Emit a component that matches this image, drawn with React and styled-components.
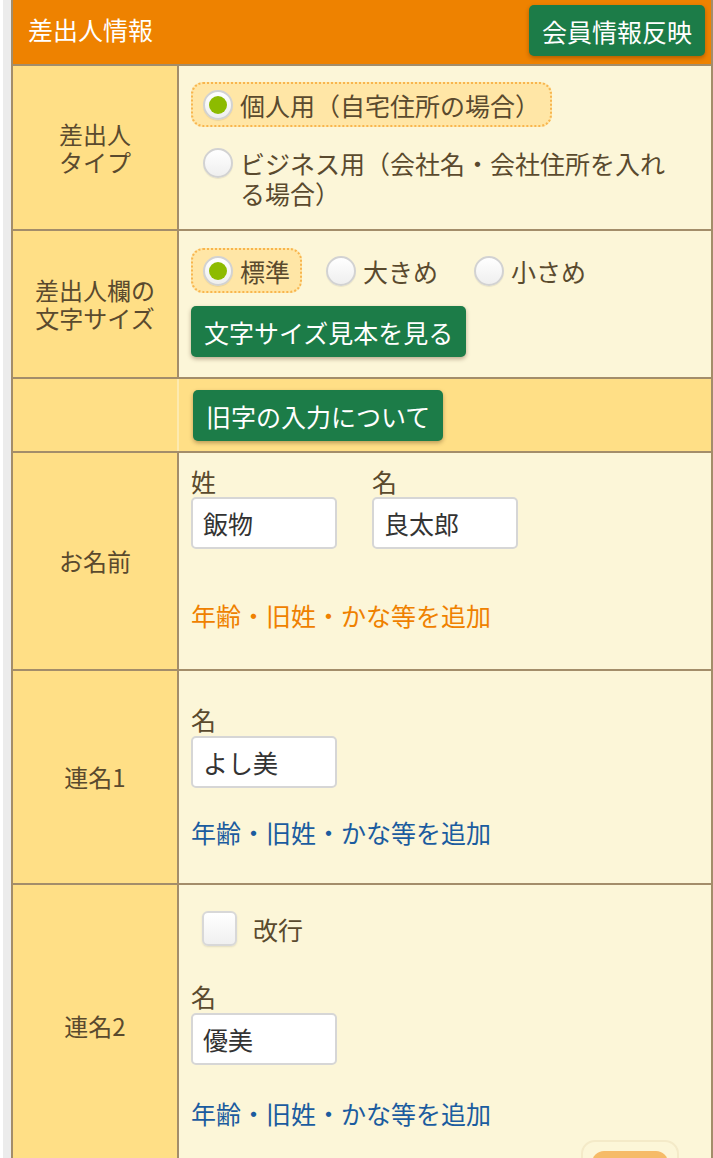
import React from "react";
import styled, { createGlobalStyle, css } from "styled-components";

const Global = createGlobalStyle`
  html, body { margin: 0; padding: 0; background: #ffffff; }
  body { font-family: "Noto Sans CJK JP", "Noto Sans", sans-serif; }
  * { box-sizing: border-box; }
`;

const BROWN = "#a38d6a";
const TEXT = "#5a4a2e";

const Page = styled.div`
  border-left: 3px solid #ffffff;
  padding-left: 8px;
  background: #ececec;
  min-height: 1158px;
`;

const Table = styled.div`
  border-left: 2px solid ${BROWN};
  border-right: 2px solid ${BROWN};
  background: #fcf6d8;
`;

const Header = styled.div`
  height: 66px;
  display: flex;
  align-items: center;
  justify-content: space-between;
  padding: 0 6px 7px 15px;
  background: #ee8200;
  border-bottom: 2px solid ${BROWN};
`;

const HeaderTitle = styled.h2`
  margin: 0;
  font-size: 25px;
  font-weight: 400;
  color: #ffffff;
  line-height: 30px;
`;

const GreenButton = styled.button`
  height: 51px;
  padding: 0 13px;
  border: none;
  border-radius: 5px;
  background: #1c7c48;
  color: #ffffff;
  font-family: inherit;
  font-size: 25px;
  line-height: 30px;
  box-shadow: 0 2px 4px rgba(60, 30, 0, 0.35);
  align-self: flex-start;
  cursor: pointer;
`;

const HeaderButton = styled(GreenButton)`
  margin-top: 5px;
`;

const Row = styled.div`
  display: flex;
  border-bottom: 2px solid ${BROWN};
  ${(p) => p.$tone === "yellow" && css`background: #ffdf86;`}
`;

const Label = styled.div`
  width: 166px;
  flex: none;
  display: flex;
  align-items: center;
  justify-content: center;
  text-align: center;
  background: #ffdf86;
  border-right: 2px solid ${(p) => (p.$soft ? "#fdeab0" : BROWN)};
  color: ${TEXT};
  font-size: 24px;
  line-height: 28px;
  white-space: pre-line;
`;

const Cell = styled.div`
  flex: 1;
  min-width: 0;
  display: flex;
  flex-direction: column;
  align-items: flex-start;
  padding: ${(p) => p.$pad || "16px 20px 14px 12px"};
`;

const OptionList = styled.div`
  display: flex;
  flex-direction: ${(p) => (p.$inline ? "row" : "column")};
  align-items: flex-start;
  gap: ${(p) => (p.$inline ? "12px" : "13px")};
`;

const Option = styled.label`
  display: flex;
  align-items: flex-start;
  gap: 7px;
  padding: 6px 10px 5px 10px;
  border: 2px dotted transparent;
  border-radius: 12px;
  color: ${TEXT};
  font-size: 25px;
  line-height: 30px;
  ${(p) =>
    p.$selected &&
    css`
      border-color: #f8b54e;
      background: #ffe6a6;
    `}
`;

const Radio = styled.span`
  flex: none;
  width: 30px;
  height: 30px;
  border-radius: 50%;
  border: 2px solid #d2d2d2;
  background: linear-gradient(#ffffff, #efefef);
  box-shadow: 0 1px 1px rgba(0, 0, 0, 0.08);
  display: flex;
  align-items: center;
  justify-content: center;
  &::after {
    content: "";
    width: 18px;
    height: 18px;
    border-radius: 50%;
    background: ${(p) => (p.$checked ? "#8dbb00" : "transparent")};
  }
`;

const Spacer = styled.div`
  height: ${(p) => p.$h}px;
  flex: none;
`;

const Fields = styled.div`
  display: flex;
  gap: 35px;
`;

const Field = styled.div`
  display: flex;
  flex-direction: column;
  gap: ${(p) => p.$gap ?? 1}px;
`;

const FieldLabel = styled.span`
  color: ${TEXT};
  font-size: 25px;
  line-height: 30px;
`;

const TextInput = styled.input`
  width: 146px;
  height: 52px;
  padding: 0 10px;
  border: 2px solid #d6d6d6;
  border-radius: 5px;
  background: #ffffff;
  color: #333333;
  font-family: inherit;
  font-size: 25px;
  outline: none;
`;

const AddLink = styled.a`
  font-size: 25px;
  line-height: 30px;
  color: ${(p) => (p.$active ? "#ef8100" : "#1b5c9f")};
  text-decoration: none;
  cursor: pointer;
`;

const CheckRow = styled.label`
  display: flex;
  align-items: center;
  gap: 16px;
  margin-left: 11px;
  color: ${TEXT};
  font-size: 25px;
  line-height: 30px;
`;

const CheckBox = styled.span`
  width: 35px;
  height: 35px;
  border-radius: 6px;
  border: 2px solid #d8d8d8;
  background: linear-gradient(#ffffff, #f0f0f0);
  box-shadow: 0 1px 2px rgba(0, 0, 0, 0.1);
`;

const PillFrame = styled.div`
  align-self: flex-end;
  margin: 12px 12px -36px 0;
  padding: 9px 9px;
  border: 2px solid #f4eac8;
  border-radius: 14px;
`;

const Pill = styled.div`
  width: 76px;
  height: 40px;
  border-radius: 12px;
  background: #f6bb68;
`;

const RadioGroup = ({ options, selected, inline }) => (
  <OptionList $inline={inline}>
    {options.map((o) => (
      <Option key={o} $selected={o === selected}>
        <Radio $checked={o === selected} />
        <span>{o}</span>
      </Option>
    ))}
  </OptionList>
);

export default function App() {
  return (
    <>
      <Global />
      <Page>
        <Table>
          <Header>
            <HeaderTitle>差出人情報</HeaderTitle>
            <HeaderButton>会員情報反映</HeaderButton>
          </Header>

          <Row>
            <Label>{"差出人\nタイプ"}</Label>
            <Cell>
              <RadioGroup
                options={["個人用（自宅住所の場合）", "ビジネス用（会社名・会社住所を入れる場合）"]}
                selected="個人用（自宅住所の場合）"
              />
            </Cell>
          </Row>

          <Row>
            <Label>{"差出人欄の\n文字サイズ"}</Label>
            <Cell $pad="17px 20px 20px 12px">
              <RadioGroup inline options={["標準", "大きめ", "小さめ"]} selected="標準" />
              <Spacer $h={13} />
              <GreenButton>文字サイズ見本を見る</GreenButton>
            </Cell>
          </Row>

          <Row $tone="yellow">
            <Label $soft />
            <Cell $pad="11px 20px 10px 14px">
              <GreenButton>旧字の入力について</GreenButton>
            </Cell>
          </Row>

          <Row>
            <Label>お名前</Label>
            <Cell $pad="13px 20px 39px 12px">
              <Fields>
                <Field>
                  <FieldLabel>姓</FieldLabel>
                  <TextInput defaultValue="飯物" />
                </Field>
                <Field>
                  <FieldLabel>名</FieldLabel>
                  <TextInput defaultValue="良太郎" />
                </Field>
              </Fields>
              <Spacer $h={51} />
              <AddLink $active>年齢・旧姓・かな等を追加</AddLink>
            </Cell>
          </Row>

          <Row>
            <Label>連名1</Label>
            <Cell $pad="33px 20px 36px 12px">
              <Field $gap={2}>
                <FieldLabel>名</FieldLabel>
                <TextInput defaultValue="よし美" />
              </Field>
              <Spacer $h={29} />
              <AddLink>年齢・旧姓・かな等を追加</AddLink>
            </Cell>
          </Row>

          <Row>
            <Label>連名2</Label>
            <Cell $pad="26px 20px 0 12px">
              <CheckRow>
                <CheckBox />
                <span>改行</span>
              </CheckRow>
              <Spacer $h={35} />
              <Field $gap={2}>
                <FieldLabel>名</FieldLabel>
                <TextInput defaultValue="優美" />
              </Field>
              <Spacer $h={33} />
              <AddLink>年齢・旧姓・かな等を追加</AddLink>
              <PillFrame>
                <Pill />
              </PillFrame>
            </Cell>
          </Row>
        </Table>
      </Page>
    </>
  );
}
